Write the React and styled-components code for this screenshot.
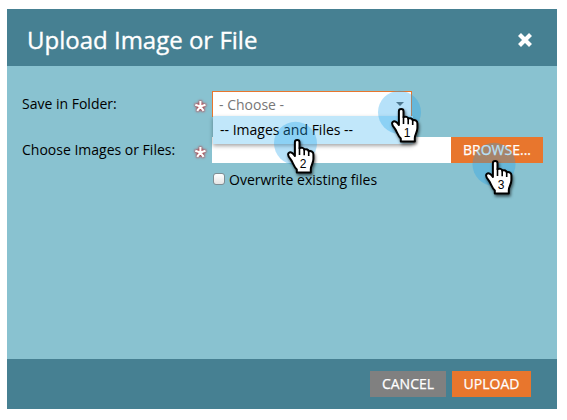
import React from "react";
import styled, { createGlobalStyle } from "styled-components";

const GlobalStyle = createGlobalStyle`
  * { box-sizing: border-box; }
  body { margin: 0; background: #fff; font-family: "Open Sans", sans-serif; }
`;

const Page = styled.main`
  position: relative;
  width: 567px;
  height: 420px;
  padding: 9px 10px 11px 7px;
  overflow: hidden;
`;

const Dialog = styled.section`
  display: flex;
  flex-direction: column;
  width: 550px;
  height: 400px;
  background: #89c2d0;
`;

const Header = styled.header`
  display: flex;
  align-items: center;
  justify-content: space-between;
  height: 57px;
  padding: 0 24px 0 20px;
  background: #468092;
`;

const Title = styled.h1`
  margin: 0;
  padding-top: 4px;
  font-size: 24px;
  line-height: 33px;
  font-weight: 400;
  color: #fff;
  -webkit-text-stroke: 0.35px #fff;
`;

const CloseButton = styled.button`
  display: flex;
  width: 16px;
  height: 16px;
  margin-top: 5px;
  padding: 0;
  border: 0;
  background: none;
`;

const Form = styled.div`
  flex: 1;
  padding: 25px 14px 0 15px;
`;

const Field = styled.div`
  display: grid;
  grid-template-columns: 171px 19px 1fr;
  height: ${(p) => p.$height}px;
`;

const Label = styled.label`
  font-size: 14px;
  line-height: 26px;
  color: #000;
  white-space: nowrap;
`;

const Required = styled.span`
  display: flex;
  padding-top: 8px;
`;

const SelectBox = styled.div`
  position: relative;
  display: flex;
  justify-content: space-between;
  align-items: center;
  width: 200px;
  height: 26px;
  padding: 0 7px 0 6px;
  border: 1px solid #e8762d;
  background: #fff;
  color: #777;
  font-size: 14px;
`;

const Menu = styled.div`
  position: absolute;
  z-index: 2;
  top: 24px;
  left: 0;
  width: 200px;
  height: 28px;
  padding-left: 7px;
  background: #c1e7fa;
  color: #000;
  font-size: 14px;
  line-height: 28px;
  box-shadow: 0 2px 4px rgba(0, 0, 0, 0.35);
`;

const FileGroup = styled.div`
  display: flex;
  height: 26px;
`;

const FileInput = styled.div`
  width: 239px;
  background: #fff;
`;

const Button = styled.button`
  width: ${(p) => p.$width}px;
  height: 26px;
  padding: 0 0 1px;
  border: 0;
  background: ${(p) => (p.$muted ? "#808080" : "#e8762d")};
  color: #fff;
  font: 400 14px/25px "Open Sans", sans-serif;
  -webkit-text-stroke: 0.25px #fff;
`;

const CheckRow = styled.label`
  display: flex;
  align-items: center;
  gap: 4px;
  margin: 3px 0 0 191px;
  height: 20px;
  font-size: 14px;
  color: #000;
`;

const CheckBox = styled.span`
  width: 12px;
  height: 12px;
  border: 1px solid #7e8d93;
  border-radius: 3px;
  background: linear-gradient(#fff, #e4e4e4);
`;

const Footer = styled.footer`
  display: flex;
  justify-content: flex-end;
  gap: 6px;
  height: 50px;
  padding: 12px 26px 0 0;
  background: #468092;
`;

const Marker = styled.svg`
  position: absolute;
  z-index: 5;
  left: ${(p) => p.$x}px;
  top: ${(p) => p.$y}px;
  overflow: visible;
  pointer-events: none;
`;

const HandShape = styled.g`
  filter: drop-shadow(1px 2px 1.5px rgba(0, 0, 0, 0.6));
`;

const AsteriskIcon = styled.svg`
  overflow: visible;
  filter: drop-shadow(0 0 1px #b52f36) drop-shadow(0 0 1px rgba(190, 50, 56, 0.7));
`;

function Asterisk() {
  return (
    <Required>
      <AsteriskIcon width="15" height="15" viewBox="0 0 15 15">
        <path
          transform="translate(7.4 7.4)"
          d="M0 0V-5.4M0 0L5.1-1.7M0 0L3.2 4.5M0 0L-3.2 4.5M0 0L-5.1-1.7"
          fill="none"
          stroke="#fff"
          strokeWidth="2.1"
        />
      </AsteriskIcon>
    </Required>
  );
}

function Pointer({ x, y, cx, number }) {
  return (
    <Marker $x={x} $y={y} width="28" height="36" viewBox="0 0 28 36">
      <circle cx={cx} cy="4.3" r="21.5" fill="#1ca2eb" fillOpacity=".32" />
      <HandShape>
        <path
          d="M7.9 16V3.2C7.9.3 12.5.3 12.5 3.2V9.2C14.4 8.2 17 8.8 17.2 10.6C19.4 9.8 21.5 10.6 21.7 12.3C24.2 11.6 26.4 12.8 26.4 15.5V20C26.4 24.5 23.8 26.5 23.8 30V33.5H9.8V30.5C6.5 27.5 6 23.2 3.5 20.2C1.5 17.7.2 15.4 1.7 14C3.8 12.2 6.2 14.4 7.9 17Z"
          fill="#fff"
          stroke="#000"
          strokeWidth="2"
          strokeLinejoin="round"
        />
        <path d="M12.5 8.5V16M17.2 10.4V16.3M21.7 12.2V17" fill="none" stroke="#000" strokeWidth="1.6" />
      </HandShape>
      <text x="16" y="28.8" textAnchor="middle" fontFamily="Liberation Sans, sans-serif" fontSize="12" fill="#000">
        {number}
      </text>
    </Marker>
  );
}

export default function App() {
  return (
    <Page>
      <GlobalStyle />
      <Dialog>
        <Header>
          <Title>Upload Image or File</Title>
          <CloseButton aria-label="Close">
            <svg width="16" height="16" viewBox="0 0 16 16">
              <path d="M2.5 2.5L13.5 13.5M13.5 2.5L2.5 13.5" stroke="#fff" strokeWidth="4.2" />
            </svg>
          </CloseButton>
        </Header>
        <Form>
          <Field $height={46}>
            <Label>Save in Folder:</Label>
            <Asterisk />
            <SelectBox>
              - Choose -
              <svg width="8" height="4" viewBox="0 0 8 4">
                <path d="M0 0H8L4 4Z" fill="#666" />
              </svg>
              <Menu>-- Images and Files --</Menu>
            </SelectBox>
          </Field>
          <Field $height={29}>
            <Label>Choose Images or Files:</Label>
            <Asterisk />
            <FileGroup>
              <FileInput />
              <Button $width={92}>BROWSE...</Button>
            </FileGroup>
          </Field>
          <CheckRow>
            <CheckBox />
            Overwrite existing files
          </CheckRow>
        </Form>
        <Footer>
          <Button $width={76} $muted>CANCEL</Button>
          <Button $width={79}>UPLOAD</Button>
        </Footer>
      </Dialog>
      <Pointer x={391} y={108} cx={8.5} number="1" />
      <Pointer x={287} y={139} cx={8.5} number="2" />
      <Pointer x={484.5} y={160} cx={9} number="3" />
    </Page>
  );
}
